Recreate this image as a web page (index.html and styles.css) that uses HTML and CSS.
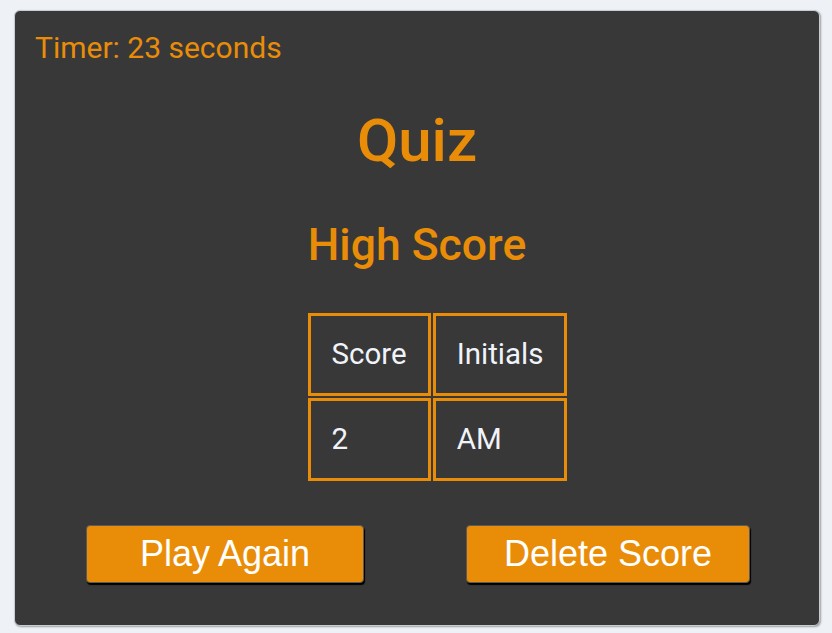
FILE: index.html
```html
<!DOCTYPE html>
<html lang="en">
<head>
<meta charset="utf-8">
<title>Quiz</title>
<link rel="stylesheet" href="styles.css">
</head>
<body>
<main class="card">
  <p class="timer">Timer: 23 seconds</p>
  <h1 class="title">Quiz</h1>
  <h2 class="subtitle">High Score</h2>
  <table class="scores">
    <tr><td>Score</td><td>Initials</td></tr>
    <tr><td>2</td><td>AM</td></tr>
  </table>
  <div class="actions">
    <button class="btn btn-play">Play Again</button>
    <button class="btn btn-delete">Delete Score</button>
  </div>
</main>
</body>
</html>
```
FILE: styles.css
```css
html, body {
  margin: 0;
  padding: 0;
  background: #eef2f6;
}
body {
  padding: 10px 12px 7px 14px;
  font-family: Roboto, "Liberation Sans", sans-serif;
}
.card {
  background: #383838;
  border: 1px solid #c9ccd0;
  border-radius: 6px;
  box-shadow: 1px 1px 2px rgba(0,0,0,0.35);
  padding: 19px 20px 42px 20px;
  display: flex;
  flex-direction: column;
  align-items: center;
  height: 616px;
  box-sizing: border-box;
}
.timer {
  align-self: flex-start;
  margin: 0;
  color: #e98d08;
  font-size: 30px;
  line-height: 35px;
}
.title {
  margin: 41px 0 0;
  color: #e98d08;
  font-size: 60px;
  font-weight: 500;
  line-height: 70px;
}
.subtitle {
  margin: 43px 0 0;
  color: #e98d08;
  font-size: 44.5px;
  font-weight: 500;
  line-height: 52px;
}
.scores {
  margin: 40px 0 0 41px;
  border-collapse: separate;
  border-spacing: 2px;
}
.scores td {
  border: 3px solid #e98d08;
  padding: 22px 21px;
  color: #f0f4fa;
  font-size: 29.5px;
  line-height: 33px;
}
.actions {
  align-self: stretch;
  display: flex;
  margin-top: 42px;
  padding-left: 51px;
  gap: 102px;
}
.btn {
  height: 58px;
  background: #e98d08;
  color: #ffffff;
  font-family: "Liberation Sans", Arial, sans-serif;
  font-size: 36px;
  border: 1px solid #5a5a5a;
  border-radius: 4px;
  box-shadow: 1px 2px 1px #000;
  padding: 0;
}
.btn-play { width: 278px; }
.btn-delete { width: 284px; }
```
